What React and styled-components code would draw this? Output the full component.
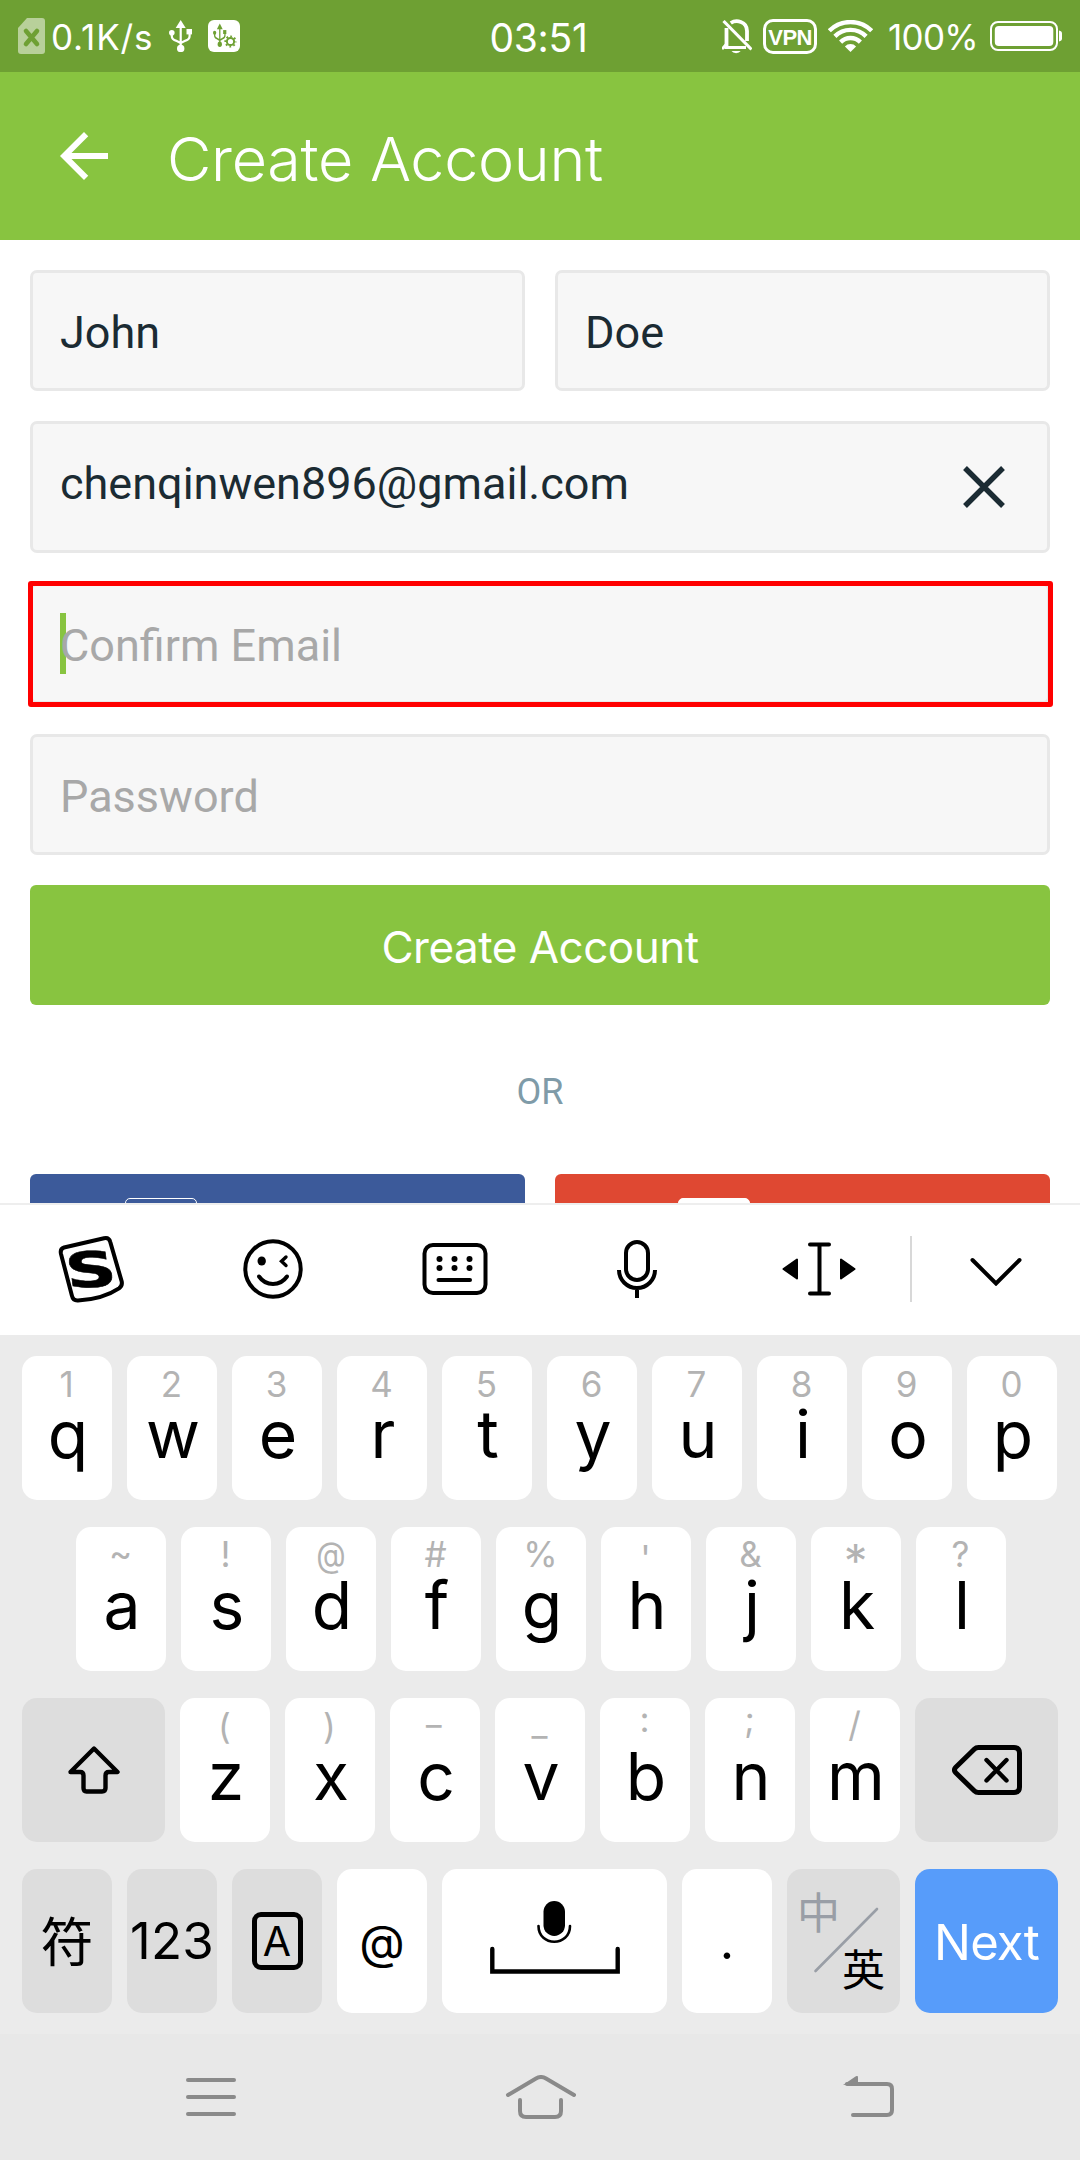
import React from "react";
import styled, { createGlobalStyle } from "styled-components";

const GlobalStyle = createGlobalStyle`
  * { box-sizing: border-box; }
  body { margin: 0; background: #fff; }
`;

const ui = `Inter, "Noto Sans CJK SC", sans-serif`;
const form = `Roboto, sans-serif`;

const Screen = styled.div`
  width: 1080px;
  height: 2160px;
  display: flex;
  flex-direction: column;
  overflow: hidden;
  background: #fff;
  font-family: ${ui};

  svg { display: block; flex: none; }
`;

/* ---------- status bar ---------- */

const StatusBar = styled.div`
  height: 72px;
  flex: none;
  display: grid;
  grid-template-columns: 1fr auto 1fr;
  align-items: center;
  padding: 0 18px;
  background: #6ea033;
  color: #fff;
`;

const StatusGroup = styled.div`
  display: flex;
  align-items: center;
  justify-content: ${(p) => (p.$end ? "flex-end" : "flex-start")};
`;

const StatusText = styled.span`
  font-size: ${(p) => p.$size}px;
  line-height: 44px;
  letter-spacing: ${(p) => p.$spacing || 0}px;
  margin: ${(p) => p.$margin || "0"};
  white-space: nowrap;
`;

const StatusIcons = styled.div`
  display: flex;
  align-items: center;
  gap: 15px;
`;

const VpnBadge = styled.span`
  width: 54px;
  height: 35px;
  margin: 1px 11px 0 11px;
  border: 3px solid #fff;
  border-radius: 10px;
  font: 700 22px/31px "Liberation Sans", sans-serif;
  letter-spacing: -0.6px;
  text-align: center;
`;

/* ---------- app header ---------- */

const Header = styled.header`
  height: 168px;
  flex: none;
  display: flex;
  align-items: center;
  gap: 47px;
  padding-left: 48px;
  background: #88c440;
  color: #fff;
`;

const Title = styled.h1`
  margin: 0;
  padding-top: 6px;
  font-size: 61px;
  font-weight: 300;
  line-height: 80px;
  letter-spacing: -0.3px;
`;

/* ---------- form ---------- */

const Form = styled.main`
  flex: 1;
  min-height: 0;
  overflow: hidden;
  display: flex;
  flex-direction: column;
  gap: 30px;
  padding: 30px 30px 0;
`;

const FieldRow = styled.div`
  display: grid;
  grid-template-columns: 1fr 1fr;
  gap: 30px;
`;

const Field = styled.div`
  position: relative;
  height: ${(p) => (p.$tall ? 132 : 121)}px;
  flex: none;
  display: flex;
  align-items: center;
  justify-content: space-between;
  padding: 0 42px 0 27px;
  border: 3px solid #e8e8e8;
  border-radius: 7px;
  background: #f7f7f7;
`;

const FocusRing = styled.div`
  position: absolute;
  inset: -5px -6px -6px -5px;
  border: 5px solid #f00;
  border-radius: 3px;
`;

const Caret = styled.div`
  position: absolute;
  left: 27px;
  top: 27px;
  width: 6px;
  height: 61px;
  background: #88c440;
`;

const FieldText = styled.span`
  position: relative;
  padding-top: ${(p) => (p.$raised ? 0 : 4)}px;
  padding-bottom: ${(p) => (p.$raised ? 7 : 0)}px;
  font-family: ${form};
  font-size: 45px;
  line-height: 60px;
  color: ${(p) => (p.$placeholder ? "#a8a8a8" : "#1b2b33")};
`;

const SubmitButton = styled.button`
  height: 120px;
  flex: none;
  border: 0;
  border-radius: 6px;
  padding: 4px 0 0;
  background: #88c440;
  color: #fff;
  font-family: ${ui};
  font-size: 44px;
  letter-spacing: -0.5px;
`;

const Divider = styled.div`
  height: 109px;
  flex: none;
  display: flex;
  align-items: center;
  justify-content: center;
  padding-top: 5px;
  font-family: ${form};
  font-size: 36px;
  color: #7f9ba8;
`;

const SocialButton = styled.div`
  height: 120px;
  padding: 24px 0 0 ${(p) => p.$inset}px;
  border-radius: 6px;
  background: ${(p) => p.$color};
`;

const SocialMark = styled.div`
  width: 72px;
  height: 72px;
  border: 1px solid #fff;
  border-radius: 5px;
  background: ${(p) => (p.$filled ? "#fff" : "transparent")};
`;

/* ---------- keyboard ---------- */

const Toolbar = styled.div`
  height: 132px;
  flex: none;
  display: grid;
  grid-template-columns: repeat(5, 182px) 2px 1fr;
  align-items: center;
  justify-items: center;
  padding-bottom: 2px;
  border-top: 2px solid #eee;
  background: #fff;
`;

const ToolbarRule = styled.div`
  width: 2px;
  height: 66px;
  background: #d8d8d8;
`;

const Keyboard = styled.div`
  height: 699px;
  flex: none;
  display: flex;
  flex-direction: column;
  gap: 27px;
  padding: 21px 22px;
  background: #ebebeb;
`;

const KeyRow = styled.div`
  display: flex;
  gap: 15px;
  padding-left: ${(p) => p.$indent || 0}px;
`;

const KeyCap = styled.div`
  width: ${(p) => p.$width || 90}px;
  height: 144px;
  flex: none;
  display: flex;
  align-items: center;
  justify-content: center;
  border-radius: 15px;
  background: ${(p) => ({ grey: "#ddd", blue: "#579cfa" }[p.$tone] || "#fff")};
  color: ${(p) => (p.$tone === "blue" ? "#fff" : "#000")};
`;

const LetterCap = styled(KeyCap)`
  flex-direction: column;
  justify-content: flex-start;
`;

const Hint = styled.span`
  height: 44px;
  padding-top: ${(p) => 8 + (p.$drop || 0)}px;
  padding-right: 1px;
  font-size: ${(p) => p.$size || 35}px;
  font-weight: 400;
  line-height: 40px;
  color: #b3b3b3;
  transform: scaleX(${(p) => p.$stretch || 1});
`;

const Letter = styled.span`
  font-size: 66px;
  line-height: 68px;
  padding-left: 2px;
`;

const KeyLabel = styled.span`
  font-size: ${(p) => p.$size}px;
  line-height: 60px;
  letter-spacing: ${(p) => p.$spacing || 0}px;
  padding-top: ${(p) => p.$drop || 0}px;
`;

const CaseBox = styled.span`
  width: 51px;
  height: 58px;
  border: 5px solid #000;
  border-radius: 9px;
  font-size: 41px;
  line-height: 48px;
  text-align: center;
`;

const LanguageCap = styled(KeyCap)`
  position: relative;
`;

const Language = styled.span`
  position: absolute;
  left: ${(p) => p.$x}px;
  top: ${(p) => p.$y}px;
  font-family: "Noto Sans CJK SC", sans-serif;
  font-size: ${(p) => p.$size}px;
  line-height: 50px;
  color: ${(p) => (p.$active ? "#000" : "#999ea6")};
`;

const NavBar = styled.nav`
  height: 126px;
  flex: none;
  display: grid;
  grid-template-columns: repeat(3, 1fr);
  justify-items: center;
  align-items: center;
  padding: 0 46px;
  background: #e8e8e8;
`;

/* ---------- icons ---------- */

const SimIcon = () => (
  <svg width="27" height="36" viewBox="0 0 27 36">
    <path d="M9 0h15a3 3 0 0 1 3 3v30a3 3 0 0 1-3 3H3a3 3 0 0 1-3-3V10z" fill="#b8d09a" />
    <path d="M8 13l11 13M19 13L8 26" stroke="#6ea033" strokeWidth="4.6" strokeLinecap="round" />
  </svg>
);

const UsbShape = () => (
  <>
    <path d="M11.7 0l5 8h-10z" />
    <circle cx="11.7" cy="28.4" r="3.7" />
    <circle cx="2.8" cy="12.8" r="2.8" />
    <path d="M17.5 9h5.5v5.4h-5.5z" />
    <path
      d="M11.7 6v22M2.8 13v3q0 3.4 4 4.6l4.9 2.4 4.9-2.4q4-1.200 4-4.6v-3"
      fill="none"
      stroke="currentColor"
      strokeWidth="2.2"
    />
  </>
);

const UsbIcon = () => (
  <svg width="24" height="32" viewBox="0 0 24 32" fill="currentColor">
    <UsbShape />
  </svg>
);

const UsbDebugIcon = () => (
  <svg width="32" height="32" viewBox="0 0 32 32">
    <rect width="32" height="32" rx="6" fill="#fff" />
    <g color="#6ea033" fill="currentColor" transform="translate(5 3.500) scale(.58 .73)">
      <UsbShape />
    </g>
    <circle cx="22.500" cy="21.500" r="6" fill="#fff" />
    <circle cx="22.500" cy="21.500" r="3.600" fill="none" stroke="#6ea033" strokeWidth="2" />
    <circle cx="22.500" cy="21.500" r="5.200" fill="none" stroke="#6ea033" strokeWidth="1.800" strokeDasharray="1.800 2.284" strokeDashoffset=".9" />
  </svg>
);

const BellOffIcon = () => (
  <svg width="30" height="35" viewBox="0 0 30 35" fill="none" stroke="#fff">
    <path d="M4.500 9v20M8.800 4C14 .5 25 2 25 12v10" strokeWidth="3.800" />
    <path d="M0 30L4 25.500V28.500H24" strokeWidth="2.800" />
    <path d="M1.500 2L29.500 30.500" strokeWidth="3.200" />
    <path d="M9.500 32h9.200a5 3.500 0 0 1-9.200 0z" fill="#fff" stroke="none" />
  </svg>
);

const WifiIcon = () => (
  <svg width="45" height="32" viewBox="0 0 45 32" fill="none" stroke="#fff" strokeWidth="4.400">
    <path d="M1.300 10.800a30 30 0 0 1 42.400 0" />
    <path d="M6.900 16.400a22 22 0 0 1 31.200 0" />
    <path d="M12.600 22.100a14 14 0 0 1 19.800 0" />
    <path d="M22.500 32l-5.600-5.600a8 8 0 0 1 11.200 0z" fill="#fff" stroke="none" />
  </svg>
);

const BatteryIcon = () => (
  <svg width="72" height="30" viewBox="0 0 72 30">
    <rect x="1" y="1" width="66" height="28" rx="7" fill="none" stroke="#fff" strokeWidth="2" />
    <rect x="4.800" y="5" width="58.500" height="20" rx="4" fill="#fff" />
    <path d="M69 9.500c2 .3 3 1.500 3 3v5c0 1.500-1 2.700-3 3z" fill="#fff" />
  </svg>
);

const BackArrowIcon = () => (
  <svg width="72" height="72" viewBox="0 0 24 24" fill="#fff">
    <path d="M20 11H7.830l5.590-5.590L12 4l-8 8 8 8 1.410-1.410L7.830 13H20v-2z" />
  </svg>
);

const ClearIcon = () => (
  <svg width="42" height="42" viewBox="0 0 42 42" stroke="#1b2b33" strokeWidth="5.400">
    <path d="M2 2l38 38M40 2L2 40" />
  </svg>
);

const SogouIcon = () => (
  <svg width="68" height="68" viewBox="0 0 68 68">
    <path
      d="M7 12.500L47 3.300q5-1.100 6.300 3.800l11.300 39q1.200 4.400-2.600 7.200Q46 64 21 65.500q-5 .3-6-4.600L4 19q-1.200-5.300 3-6.500z"
      fill="none"
      stroke="#000"
      strokeWidth="4"
      strokeLinejoin="round"
    />
    <text
      transform="translate(33.500 34) rotate(-3) skewX(5) scale(1.440 1)"
      y="18"
      textAnchor="middle"
      fontFamily="DejaVu Sans, sans-serif"
      fontWeight="700"
      fontSize="49"
      stroke="#000"
      strokeWidth=".5"
    >
      S
    </text>
  </svg>
);

const SmileIcon = () => (
  <svg width="60" height="60" viewBox="0 0 60 60" fill="none" stroke="#000" strokeWidth="4" strokeLinecap="round">
    <circle cx="30" cy="30" r="27.700" />
    <ellipse cx="18.700" cy="22" rx="4.200" ry="4.500" fill="#000" stroke="none" />
    <path d="M43 18l-4.500 4.300L43 26.500" strokeWidth="3.400" />
    <path d="M16 37.500c7 10 21 10 28 0" />
  </svg>
);

const KeyboardIcon = () => (
  <svg width="66" height="52" viewBox="0 0 66 52">
    <rect x="2.500" y="2" width="61" height="48" rx="8.500" fill="none" stroke="#000" strokeWidth="4" />
    {[17.500, 32.500, 47.500].map((x) =>
      [16, 25].map((y) => <circle key={`${x}-${y}`} cx={x} cy={y} r="3" />)
    )}
    <path d="M16.500 37h31.500" stroke="#000" strokeWidth="4" strokeLinecap="round" />
  </svg>
);

const MicIcon = () => (
  <svg width="40" height="58" viewBox="0 0 40 58" fill="none" stroke="#000" strokeWidth="4">
    <rect x="9" y="2" width="22" height="38" rx="11" />
    <path d="M2 30a18 18 0 0 0 36 0M20 48v10" />
  </svg>
);

const CursorIcon = () => (
  <svg width="74" height="54" viewBox="0 0 74 54">
    <path d="M28 2.500h19M28 51.500h19M37.500 2.500v49" stroke="#000" strokeWidth="4" strokeLinecap="round" />
    <path d="M15 17.500v19L1.500 27zM59 17.500v19L72.500 27z" stroke="#000" strokeWidth="2" strokeLinejoin="round" />
  </svg>
);

const ChevronIcon = () => (
  <svg width="52" height="34" viewBox="0 -6 52 34" fill="none" stroke="#000" strokeWidth="4" strokeLinecap="round">
    <path d="M2.500 2L26 25.500 49.500 2" />
  </svg>
);

const ShiftIcon = () => (
  <svg width="52" height="48" viewBox="0 0 52 48" fill="none" stroke="#000" strokeWidth="4.400" strokeLinejoin="round">
    <path d="M26 2.500L49.500 26H41q-3.500 0-3.500 3.500V42q0 3.500-3.500 3.500H18.500q-3 0-3-3.500V29.500Q15.500 26 12 26H2.500z" />
  </svg>
);

const BackspaceIcon = () => (
  <svg width="70" height="50" viewBox="0 0 70 50" fill="none" stroke="#000" strokeWidth="5" strokeLinejoin="round" strokeLinecap="round">
    <path d="M26.500 2.500H62q5.500 0 5.500 5.500v34q0 5.500-5.500 5.500H26.500q-2.500 0-4-1.500L3.500 27.500q-2-2.500 0-5L22.500 4q1.500-1.500 4-1.500z" />
    <path d="M34.500 15l20 20.500M54.500 15l-20 20.500" strokeWidth="4.400" />
  </svg>
);

const SpaceIcon = () => (
  <svg width="130" height="80" viewBox="0 0 130 80" fill="none" stroke="#000" strokeWidth="4.400" strokeLinecap="round">
    <rect x="53.500" y="0" width="21.500" height="35" rx="10.700" fill="#000" stroke="none" />
    <path d="M48.500 25c0 21 31.500 21 31.500 0" strokeWidth="2.600" />
    <path d="M2.300 48v22.500h125.400V48" />
  </svg>
);

const SlashIcon = () => (
  <svg width="113" height="144" viewBox="0 0 113 144" stroke="#999ea6" strokeWidth="2.600" strokeLinecap="round">
    <path d="M28.500 102L90 40" />
  </svg>
);

const MenuIcon = () => (
  <svg width="50" height="38" viewBox="0 0 50 38" stroke="#8a8a8a" strokeWidth="4" strokeLinecap="round">
    <path d="M2 2h46M2 19h46M2 36h46" />
  </svg>
);

const HomeIcon = () => (
  <svg width="72" height="44" viewBox="-2 0 72 44" fill="none" stroke="#8a8a8a" strokeWidth="4" strokeLinecap="round">
    <path d="M2 20L30 3.500q5-3 10 0L68 20" />
    <path d="M14 25v11q0 6 6 6h29q6 0 6-6V25" />
  </svg>
);

const ReturnIcon = () => (
  <svg width="52" height="42" viewBox="0 0 52 42" fill="none" stroke="#8a8a8a" strokeWidth="4" strokeLinecap="round">
    <path d="M4 8h40q5 0 5 5v21q0 5-5 5H10" />
    <path d="M0 9L12.500.5Q15-1 15 1.500V8z" fill="#8a8a8a" stroke="none" />
  </svg>
);

/* ---------- data ---------- */

const topRow = [
  { hint: "1", letter: "q" },
  { hint: "2", letter: "w" },
  { hint: "3", letter: "e" },
  { hint: "4", letter: "r" },
  { hint: "5", letter: "t" },
  { hint: "6", letter: "y" },
  { hint: "7", letter: "u" },
  { hint: "8", letter: "i" },
  { hint: "9", letter: "o" },
  { hint: "0", letter: "p" },
];

const homeRow = [
  { hint: "~", letter: "a", drop: -2 },
  { hint: "!", letter: "s", drop: -1 },
  { hint: "@", letter: "d", drop: -1, stretch: 0.87 },
  { hint: "#", letter: "f", drop: -1 },
  { hint: "%", letter: "g", drop: -1 },
  { hint: "'", letter: "h", drop: 3 },
  { hint: "&", letter: "j", drop: -1 },
  { hint: "*", letter: "k", drop: 6, size: 46, stretch: 1.03 },
  { hint: "?", letter: "l", drop: -1 },
];

const bottomRow = [
  { hint: "(", letter: "z" },
  { hint: ")", letter: "x" },
  { hint: "-", letter: "c", drop: -2, stretch: 1.4 },
  { hint: "_", letter: "v", drop: -3 },
  { hint: ":", letter: "b", drop: -7 },
  { hint: ";", letter: "n", drop: -7 },
  { hint: "/", letter: "m", drop: -2 },
];

const Keys = ({ items }) =>
  items.map(({ hint, letter, drop, stretch, size }) => (
    <LetterCap key={letter}>
      <Hint $drop={drop} $stretch={stretch} $size={size}>{hint}</Hint>
      <Letter>{letter}</Letter>
    </LetterCap>
  ));

export default function App() {
  return (
    <Screen>
      <GlobalStyle />
      <StatusBar>
        <StatusGroup>
          <SimIcon />
          <StatusText $size={35} $spacing={0.9} $margin="2px 15px 0 6px">0.1K/s</StatusText>
          <StatusIcons>
            <UsbIcon />
            <UsbDebugIcon />
          </StatusIcons>
        </StatusGroup>
        <StatusText $size={39} $spacing={-0.3} $margin="3px 3px 0 0">03:51</StatusText>
        <StatusGroup $end>
          <BellOffIcon />
          <VpnBadge>VPN</VpnBadge>
          <WifiIcon />
          <StatusText $size={35} $spacing={-0.7} $margin="2px 12px 0 15px">100%</StatusText>
          <BatteryIcon />
        </StatusGroup>
      </StatusBar>

      <Header>
        <BackArrowIcon />
        <Title>Create Account</Title>
      </Header>

      <Form>
        <FieldRow>
          <Field><FieldText>John</FieldText></Field>
          <Field><FieldText>Doe</FieldText></Field>
        </FieldRow>
        <Field $tall>
          <FieldText $raised>chenqinwen896@gmail.com</FieldText>
          <ClearIcon />
        </Field>
        <Field>
          <FocusRing />
          <Caret />
          <FieldText $placeholder>Confirm Email</FieldText>
        </Field>
        <Field><FieldText $placeholder>Password</FieldText></Field>
        <SubmitButton>Create Account</SubmitButton>
        <Divider>OR</Divider>
        <FieldRow>
          <SocialButton $color="#3c5a9a" $inset={95}><SocialMark /></SocialButton>
          <SocialButton $color="#df4832" $inset={123}><SocialMark $filled /></SocialButton>
        </FieldRow>
      </Form>

      <Toolbar>
        <SogouIcon />
        <SmileIcon />
        <KeyboardIcon />
        <MicIcon />
        <CursorIcon />
        <ToolbarRule />
        <ChevronIcon />
      </Toolbar>

      <Keyboard>
        <KeyRow><Keys items={topRow} /></KeyRow>
        <KeyRow $indent={54}><Keys items={homeRow} /></KeyRow>
        <KeyRow>
          <KeyCap $tone="grey" $width={143}><ShiftIcon /></KeyCap>
          <Keys items={bottomRow} />
          <KeyCap $tone="grey" $width={143}><BackspaceIcon /></KeyCap>
        </KeyRow>
        <KeyRow>
          <KeyCap $tone="grey"><KeyLabel $size={53} $drop={4}>符</KeyLabel></KeyCap>
          <KeyCap $tone="grey"><KeyLabel $size={51} $spacing={0.2}>123</KeyLabel></KeyCap>
          <KeyCap $tone="grey"><CaseBox>A</CaseBox></KeyCap>
          <KeyCap><KeyLabel $size={47} $drop={1}>@</KeyLabel></KeyCap>
          <KeyCap $width={225}><SpaceIcon /></KeyCap>
          <KeyCap><KeyLabel $size={50}>.</KeyLabel></KeyCap>
          <LanguageCap $tone="grey" $width={113}>
            <SlashIcon />
            <Language $x={10} $y={16} $size={43}>中</Language>
            <Language $x={55} $y={73} $size={43} $active>英</Language>
          </LanguageCap>
          <KeyCap $tone="blue" $width={143}>
            <KeyLabel $size={49} $spacing={-0.8} $drop={4}>Next</KeyLabel>
          </KeyCap>
        </KeyRow>
      </Keyboard>

      <NavBar>
        <MenuIcon />
        <HomeIcon />
        <ReturnIcon />
      </NavBar>
    </Screen>
  );
}
